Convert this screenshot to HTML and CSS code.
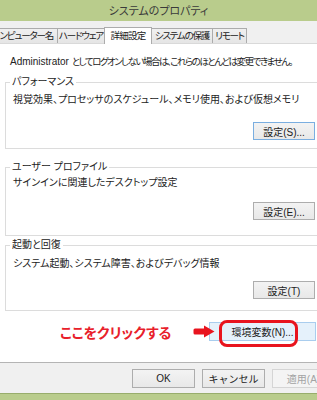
FILE: index.html
```html
<!DOCTYPE html>
<html>
  <head>
    <title>システムのプロパティ</title>
    <link rel="stylesheet" href="styles.css">
  </head>
  <body>
    <div class="window">
      <div class="titlebar">システムのプロパティ</div>

      <div class="tabbar">
        <div class="tab computer">コンピューター名</div>
        <div class="tab hardware">ハードウェア</div>
        <div class="tab active">詳細設定</div>
        <div class="tab protect">システムの保護</div>
        <div class="tab remote">リモート</div>
      </div>

      <div class="page">
        <p class="note">Administrator <span class="jp">としてログオンしない場合は、これらのほとんどは変更できません。</span></p>

        <fieldset class="group perf">
          <legend>パフォーマンス</legend>
          <p class="desc">視覚効果、プロセッサのスケジュール、メモリ使用、および仮想メモリ</p>
          <div class="actions">
            <button type="button" class="btn focused">設定(S)...</button>
          </div>
        </fieldset>

        <fieldset class="group profile">
          <legend>ユーザー プロファイル</legend>
          <p class="desc">サインインに関連したデスクトップ設定</p>
          <div class="actions">
            <button type="button" class="btn">設定(E)...</button>
          </div>
        </fieldset>

        <fieldset class="group startup">
          <legend>起動と回復</legend>
          <p class="desc">システム起動、システム障害、およびデバッグ情報</p>
          <div class="actions">
            <button type="button" class="btn">設定(T)</button>
          </div>
        </fieldset>

        <div class="env-row">
          <span class="callout">ここをクリックする</span>
          <svg class="arrow" width="22" height="13" viewBox="0 0 22 13">
            <path d="M2 3.5 H11 V0.5 L21.5 6.5 L11 12.5 V9.5 H2 Q0.5 9.5 0.5 8 V5 Q0.5 3.5 2 3.5 Z" fill="#e8141e"/>
          </svg>
          <button type="button" class="btn env">環境変数(N)...</button>
          <span class="ring"></span>
        </div>
      </div>

      <div class="footer">
        <button type="button" class="btn">OK</button>
        <button type="button" class="btn">キャンセル</button>
        <button type="button" class="btn" disabled>適用(A)</button>
      </div>
      <div class="frame-bottom"></div>
    </div>
  </body>
</html>
```

FILE: styles.css
```css
body {
  margin: 0;
  background-color: #f0f0f0;
  font-family: "Liberation Sans", "Noto Sans CJK JP", sans-serif;
  font-feature-settings: "palt";
  color: #222;
  overflow: hidden;
}
.window {
  width: 317px;
  height: 400px;
  overflow: hidden;
  background-color: #f0f0f0;
}

.titlebar {
  height: 21px;
  line-height: 22px;
  background-color: #b9cc8c;
  color: #3a3a3a;
  font-size: 11px;
  text-align: center;
}

/* tabs */
.tabbar {
  height: 22px;
  display: flex;
  align-items: flex-end;
  margin-left: -6px;
}
.tab {
  box-sizing: border-box;
  flex: none;
  height: 15px;
  line-height: 14px;
  font-size: 9.5px;
  letter-spacing: -1.2px;
  text-align: center;
  white-space: nowrap;
  border: 1px solid #acacac;
  border-bottom: none;
  border-right: none;
  background: linear-gradient(#f0f0f0, #e5e5e5);
}
.tab.computer {
  width: 63px;
  display: flex;
  justify-content: flex-end;
  padding-right: 4px;
}
.tab.hardware { width: 47px; }
.tab.protect { width: 60px; }
.tab.remote {
  width: 35px;
  border-right: 1px solid #acacac;
}
.tab.active {
  width: 48px;
  height: 17px;
  line-height: 16px;
  letter-spacing: -0.8px;
  background: #fff;
  border-right: 1px solid #acacac;
  margin-bottom: -1px;
  position: relative;
  z-index: 1;
}
.tab.active + .tab {
  border-left: none;
}

/* tab page */
.page {
  box-sizing: border-box;
  height: 320px;
  background-color: #fff;
  border-top: 1px solid #d9d9d9;
  border-bottom: 1px solid #b4b4b4;
  padding-left: 5px;
  position: relative;
}

.note {
  margin: 10px 0 0 5px;
  font-size: 10px;
  line-height: 16px;
  white-space: nowrap;
}
.note .jp {
  font-size: 9.5px;
  letter-spacing: -1.5px;
}

.group {
  margin: 5px -20px 0 0;
  padding: 0 21px 8px 7px;
  border: 1px solid #dcdcdc;
  min-width: 0;
}
.group legend {
  margin-left: -3px;
  padding: 0 2px;
  font-size: 10px;
  line-height: 14px;
}
.desc {
  margin: 3px 0 0;
  font-size: 10px;
  line-height: 16px;
  white-space: nowrap;
}
.actions {
  margin-top: 14px;
  display: flex;
  justify-content: flex-end;
}

.group.profile {
  margin-top: 11px;
  padding-bottom: 15px;
}
.group.profile .desc { margin-top: 1px; }
.group.profile .actions { margin-top: 11px; }

.group.startup {
  margin-top: 2px;
  padding-bottom: 11px;
}
.group.startup .desc { margin-top: 4px; }
.group.startup .actions { margin-top: 9px; }

/* buttons */
.btn {
  box-sizing: border-box;
  width: 62px;
  height: 18px;
  padding: 0;
  font-family: inherit;
  font-size: 10px;
  color: #222;
  background: linear-gradient(#f3f3f3, #e8e8e8);
  border: 1px solid #adadad;
  border-radius: 0;
}
.btn.focused {
  border-color: #7aaee0;
}
.btn:disabled {
  color: #a3a3a3;
  background: #f4f4f4;
  border-color: #d5d5d5;
}

/* annotation row */
.env-row {
  margin-top: 11px;
  display: flex;
  align-items: center;
  height: 19px;
  padding-left: 55px;
}
.callout {
  color: #e8202a;
  font-weight: bold;
  font-size: 14px;
  white-space: nowrap;
  width: 133px;
}
.arrow {
  flex: none;
  position: relative;
  z-index: 1;
}
.btn.env {
  width: 107px;
  height: 19px;
  margin-left: -6px;
  background: #e5f1fb;
  border-color: #a9cdee;
}
.ring {
  position: absolute;
  left: 219px;
  top: 276px;
  width: 79px;
  height: 27px;
  box-sizing: border-box;
  border: 3px solid #e8141e;
  border-radius: 8px;
}

.footer {
  height: 30px;
  box-sizing: border-box;
  padding: 6px 0 0 132px;
  display: flex;
  gap: 7px;
}
.footer .btn {
  flex: none;
  width: 63px;
  height: 19px;
}

.frame-bottom {
  height: 6px;
  background-color: #b9cc8c;
  border-top: 1px solid #98ad6c;
}
```
